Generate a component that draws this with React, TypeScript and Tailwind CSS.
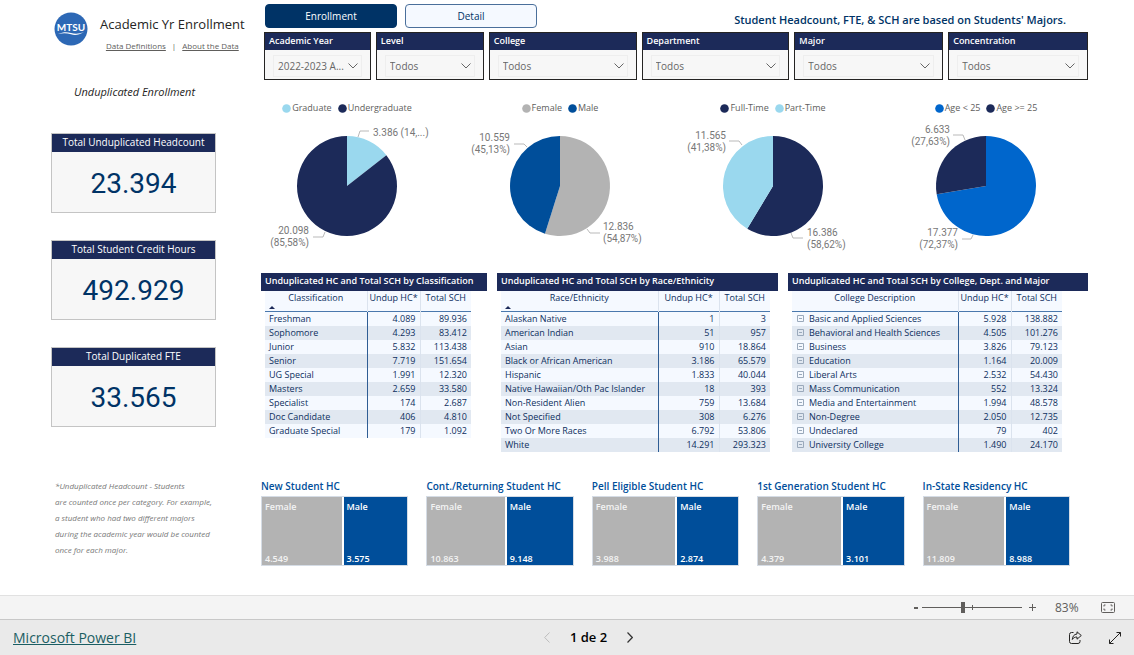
import { useState } from "react"

const slicers = [
  { id: "year", label: "Academic Year", value: "2022-2023 A..." },
  { id: "level", label: "Level", value: "Todos" },
  { id: "college", label: "College", value: "Todos" },
  { id: "department", label: "Department", value: "Todos" },
  { id: "major", label: "Major", value: "Todos" },
  { id: "concentration", label: "Concentration", value: "Todos" },
]

const totals = [
  { title: "Total Unduplicated Headcount", value: "23.394" },
  { title: "Total Student Credit Hours", value: "492.929" },
  { title: "Total Duplicated FTE", value: "33.565" },
]

type Label = { lines: string[]; x: number; y: number; end?: boolean; leader: string }
type Slice = { name: string; color: string; share: number }
type Pie = { slices: Slice[]; labels: Label[] }

const pies: Pie[] = [
  {
    slices: [
      { name: "Graduate", color: "#9ad8ee", share: 0.1442 },
      { name: "Undergraduate", color: "#1c2a59", share: 0.8558 },
    ],
    labels: [
      { lines: ["3.386 (14,...)"], x: 112, y: 18, leader: "97,19 99,13 108,13" },
      { lines: ["20.098", "(85,58%)"], x: 48, y: 116, end: true, leader: "64,114 62,119 52,119" },
    ],
  },
  {
    slices: [
      { name: "Female", color: "#b3b3b3", share: 0.5487 },
      { name: "Male", color: "#004e9a", share: 0.4513 },
    ],
    labels: [
      { lines: ["10.559", "(45,13%)"], x: 36, y: 23, end: true, leader: "40,26 50,26 53,29" },
      { lines: ["12.836", "(54,87%)"], x: 129, y: 112, leader: "113,111 116,115 126,115" },
    ],
  },
  {
    slices: [
      { name: "Full-Time", color: "#1c2a59", share: 0.5862 },
      { name: "Part-Time", color: "#9ad8ee", share: 0.4138 },
    ],
    labels: [
      { lines: ["11.565", "(41,38%)"], x: 39, y: 21, end: true, leader: "42,23 52,23 55,27" },
      { lines: ["16.386", "(58,62%)"], x: 120, y: 118, leader: "104,115 106,120 116,120" },
    ],
  },
  {
    slices: [
      { name: "Age < 25", color: "#0066cc", share: 0.7237 },
      { name: "Age >= 25", color: "#1c2a59", share: 0.2763 },
    ],
    labels: [
      { lines: ["6.633", "(27,63%)"], x: 50, y: 15, end: true, leader: "53,17 63,17 65,22" },
      { lines: ["17.377", "(72,37%)"], x: 58, y: 118, end: true, leader: "62,121 71,121 73,117" },
    ],
  },
]

const classification = [
  ["Freshman", "4.089", "89.936"],
  ["Sophomore", "4.293", "83.412"],
  ["Junior", "5.832", "113.438"],
  ["Senior", "7.719", "151.654"],
  ["UG Special", "1.991", "12.320"],
  ["Masters", "2.659", "33.580"],
  ["Specialist", "174", "2.687"],
  ["Doc Candidate", "406", "4.810"],
  ["Graduate Special", "179", "1.092"],
]

const ethnicity = [
  ["Alaskan Native", "1", "3"],
  ["American Indian", "51", "957"],
  ["Asian", "910", "18.864"],
  ["Black or African American", "3.186", "65.579"],
  ["Hispanic", "1.833", "40.044"],
  ["Native Hawaiian/Oth Pac Islander", "18", "393"],
  ["Non-Resident Alien", "759", "13.684"],
  ["Not Specified", "308", "6.276"],
  ["Two Or More Races", "6.792", "53.806"],
  ["White", "14.291", "293.323"],
]

const colleges = [
  ["Basic and Applied Sciences", "5.928", "138.882"],
  ["Behavioral and Health Sciences", "4.505", "101.276"],
  ["Business", "3.826", "79.123"],
  ["Education", "1.164", "20.009"],
  ["Liberal Arts", "2.532", "54.430"],
  ["Mass Communication", "552", "13.324"],
  ["Media and Entertainment", "1.994", "48.578"],
  ["Non-Degree", "2.050", "12.735"],
  ["Undeclared", "79", "402"],
  ["University College", "1.490", "24.170"],
]

const treemaps = [
  { title: "New Student HC", female: "4.549", male: "3.575" },
  { title: "Cont./Returning Student HC", female: "10.863", male: "9.148" },
  { title: "Pell Eligible Student HC", female: "3.988", male: "2.874" },
  { title: "1st Generation Student HC", female: "4.379", male: "3.101" },
  { title: "In-State Residency HC", female: "11.809", male: "8.988" },
]

const toNumber = (text: string) => Number(text.replace(".", ""))

const CX = 86
const CY = 68
const R = 50

// path of a pie slice, shares counted clockwise from the top
const slicePath = (from: number, share: number) => {
  const a = from * 2 * Math.PI
  const b = (from + share) * 2 * Math.PI
  const big = share > 0.5 ? 1 : 0
  return `M${CX} ${CY} L${CX + R * Math.sin(a)} ${CY - R * Math.cos(a)} A${R} ${R} 0 ${big} 1 ${CX + R * Math.sin(b)} ${CY - R * Math.cos(b)} Z`
}

const PieChart = ({ slices, labels }: Pie) => (
  <div className="w-[172px]">
    <ul className="flex h-3 items-center justify-center gap-1.5 whitespace-nowrap text-[9px] leading-3 text-[#605e5c]">
      {slices.map((slice) => (
        <li key={slice.name} className="flex items-center gap-px">
          <svg className="size-[9px]" viewBox="0 0 9 9">
            <circle cx="4.5" cy="4.5" r="4.3" fill={slice.color} />
          </svg>
          {slice.name}
        </li>
      ))}
    </ul>
    <svg className="mt-1 h-[134px] w-[172px] overflow-visible" viewBox="0 0 172 134">
      {slices.map((slice, index) => (
        <path key={slice.name} d={slicePath(index === 0 ? 0 : slices[0].share, slice.share)} fill={slice.color} />
      ))}
      {labels.map((label) => (
        <g key={label.leader}>
          <polyline points={label.leader} fill="none" stroke="#b9b9b9" />
          {label.lines.map((line, index) => (
            <text
              key={line}
              x={label.x}
              y={label.y + index * 12}
              textAnchor={label.end ? "end" : "start"}
              className="fill-[#777777] font-[Roboto,sans-serif] text-[10px]"
            >
              {line}
            </text>
          ))}
        </g>
      ))}
    </svg>
  </div>
)

type TableProps = {
  title: string
  heading: string
  rows: string[][]
  tableClass: string
  hcClass: string
  expandable?: boolean
}

const DataTable = ({ title, heading, rows, tableClass, hcClass, expandable }: TableProps) => (
  <section className="min-w-0">
    <h2 className="h-[18px] bg-[#1c2a59] pl-1 text-[9px] leading-4 font-semibold whitespace-nowrap text-white">{title}</h2>
    <div className={tableClass}>
      <table className="w-full table-fixed border-collapse text-[9px] text-[#0d2f5e]">
        <thead>
          <tr className="h-5 border-b border-[#4a78ad] bg-[#f5f9ff] align-top leading-[14px]">
            <th className="relative p-0 font-normal">
              {heading}
              {!expandable && (
                <svg className="absolute bottom-0.5 left-1 h-[3px] w-[6px]" viewBox="0 0 6 3">
                  <path d="M0 3 3 0 6 3Z" fill="#1c2a59" />
                </svg>
              )}
            </th>
            <th className={hcClass + " border-l border-[#dbe3ee] p-0 font-normal whitespace-nowrap"}>Undup HC*</th>
            <th className="w-[51px] border-l border-[#dbe3ee] p-0 font-normal whitespace-nowrap">Total SCH</th>
          </tr>
        </thead>
        <tbody>
          {rows.map(([name, hc, sch]) => (
            <tr key={name} className="h-[14px] bg-[#f5f9ff] leading-[14px] even:bg-[#e1e8f1]">
              <td className="pl-1 whitespace-nowrap">
                {expandable ? (
                  <span className="flex items-center gap-[5px]">
                    <button type="button" aria-label={"Expand " + name} className="ml-px">
                      <svg className="size-[7px]" viewBox="0 0 7 7" fill="none" stroke="#9aa9bb">
                        <path d="M.5 .5h6v6h-6zM2 3.5h3" />
                      </svg>
                    </button>
                    {name}
                  </span>
                ) : (
                  name
                )}
              </td>
              <td className="border-l border-[#2f5d94] pr-1 text-right">{hc}</td>
              <td className="border-l border-[#dbe3ee] pr-1 text-right">{sch}</td>
            </tr>
          ))}
        </tbody>
      </table>
    </div>
  </section>
)

const Logo = () => (
  <svg className="size-[34px] shrink-0" viewBox="0 0 34 34" role="img" aria-label="MTSU">
    <circle cx="17" cy="17" r="16.5" fill="#2d68b5" />
    <text x="17" y="19" textAnchor="middle" fill="#fff" className="font-[Lato,sans-serif] text-[10px] font-bold">
      MTSU
    </text>
    <path d="M4 22c5-2 9-2 13-1s8 1 13-1c-5 3-9 3.500-13 2.300s-8-1.300-13-.3z" fill="#fff" />
  </svg>
)

const Sidebar = () => (
  <aside className="w-[261px] shrink-0 pt-3">
    <div className="flex gap-3 pl-[54px]">
      <Logo />
      <div className="whitespace-nowrap">
        <h1 className="text-[13px] leading-6 text-[#252423]">Academic Yr Enrollment</h1>
        <p className="flex justify-center gap-1.5 text-[8px] leading-5 text-[#605e5c]">
          <a href="#definitions" className="underline">Data Definitions</a>
          <span>|</span>
          <a href="#about" className="underline">About the Data</a>
        </p>
      </div>
    </div>
    <p className="mt-7 pl-[74px] text-[11px] leading-4 text-[#252423] italic">Unduplicated Enrollment</p>
    <div className="mt-[33px] ml-[51px] flex w-[165px] flex-col gap-[27px]">
      {totals.map((total) => (
        <section key={total.title} className="border border-[#c4c4c4] bg-[#f7f7f7]">
          <h2 className="h-[18px] bg-[#1c2a59] text-center text-[10px] leading-4 whitespace-nowrap text-white">{total.title}</h2>
          <p className="flex h-[60px] items-center justify-center pt-1 font-[Roboto,sans-serif] text-[28px] text-[#003366]">
            {total.value}
          </p>
        </section>
      ))}
    </div>
    <p className="mt-[51px] ml-[55px] text-[8px] leading-4 whitespace-nowrap text-[#777777] italic">
      *Unduplicated Headcount - Students
      <br />
      are counted once per category. For example,
      <br />
      a student who had two different majors
      <br />
      during the academic year would be counted
      <br />
      once for each major.
    </p>
  </aside>
)

const App = () => {
  const [page, setPage] = useState("Enrollment")
  const [zoom, setZoom] = useState(41)

  return (
    <div className="flex min-h-screen flex-col bg-white font-['Open_Sans',sans-serif]">
      <div className="flex flex-1">
        <Sidebar />
        <main className="min-w-0 flex-1 pt-1 pr-[46px]">
          <div className="flex items-start gap-2 pl-1">
            {["Enrollment", "Detail"].map((name) => (
              <button
                key={name}
                type="button"
                onClick={() => setPage(name)}
                className={
                  name === page
                    ? "h-6 w-[132px] rounded border border-[#003366] bg-[#003366] text-[10px] text-white"
                    : "h-6 w-[132px] rounded border border-[#4a6f9b] bg-[#f5f9ff] text-[10px] text-[#003366]"
                }
              >
                {name}
              </button>
            ))}
            <p className="mr-[22px] ml-auto pt-2 text-[11px] leading-4 font-semibold whitespace-nowrap text-[#003366]">
              Student Headcount, FTE, &amp; SCH are based on Students' Majors.
            </p>
          </div>

          {/* SLICERS */}
          <div className="mt-1 grid grid-cols-[107fr_108fr_148fr_148fr_149fr_140fr] gap-[5px] pl-[3px]">
            {slicers.map((slicer) => (
              <div key={slicer.id} className="h-12 border border-[#252423] bg-[#f7f7f7]">
                <label htmlFor={slicer.id} className="block h-[17px] bg-[#1c2a59] pl-1 text-[9px] leading-4 font-semibold text-white">
                  {slicer.label}
                </label>
                <div className="relative mx-2 mt-[5px]">
                  <select
                    id={slicer.id}
                    className="block h-[22px] w-full appearance-none border border-[#eeeeee] bg-[#f7f7f7] pl-1 text-[10px] text-[#666666]"
                  >
                    <option>{slicer.value}</option>
                  </select>
                  <svg className="pointer-events-none absolute top-2 right-1 h-[6px] w-[10px]" viewBox="0 0 10 6" fill="none" stroke="#666666">
                    <path d="M.5 .5 5 5 9.500 .5" />
                  </svg>
                </div>
              </div>
            ))}
          </div>

          {/* PIES */}
          <div className="mt-[22px] flex justify-between pr-4">
            {pies.map((pie) => (
              <PieChart key={pie.slices[0].name} {...pie} />
            ))}
          </div>

          {/* TABLES */}
          <div className="mt-[21px] grid grid-cols-[226fr_281fr_300fr] gap-[10px]">
            <DataTable title="Unduplicated HC and Total SCH by Classification" heading="Classification" rows={classification} tableClass="ml-1 mr-4" hcClass="w-[53px]" />
            <DataTable title="Unduplicated HC and Total SCH by Race/Ethnicity" heading="Race/Ethnicity" rows={ethnicity} tableClass="ml-1 mr-2" hcClass="w-[61px]" />
            <DataTable title="Unduplicated HC and Total SCH by College, Dept. and Major" heading="College Description" rows={colleges} tableClass="ml-1 mr-[26px]" hcClass="w-[53px]" expandable />
          </div>

          {/* TREEMAPS */}
          <div className="mt-[26px] grid grid-cols-5 gap-[18px] pr-[18px] pb-7">
            {treemaps.map((item) => (
              <section key={item.title}>
                <h2 className="text-[10px] leading-4 font-semibold whitespace-nowrap text-[#004e9a]">{item.title}</h2>
                <div className="mt-0.5 flex h-[70px] gap-0.5 border border-[#d5dce5] text-[9px] leading-3 font-semibold text-white">
                  <div className="flex basis-0 flex-col justify-between bg-[#b3b3b3] px-[3px] pt-1 text-[#f3f3f3]" style={{ flexGrow: toNumber(item.female) }}>
                    <span>Female</span>
                    <span>{item.female}</span>
                  </div>
                  <div className="flex basis-0 flex-col justify-between bg-[#004e9a] px-[3px] pt-1" style={{ flexGrow: toNumber(item.male) }}>
                    <span>Male</span>
                    <span>{item.male}</span>
                  </div>
                </div>
              </section>
            ))}
          </div>
        </main>
      </div>

      <div className="flex h-6 items-center justify-end border-t border-[#e1e1e1] bg-[#f4f4f4] pr-[19px] text-[#605e5c]">
        <button type="button" aria-label="Zoom out" className="w-3">
          <svg className="mx-auto h-[2px] w-1" viewBox="0 0 4 2">
            <path d="M0 0h4v2H0z" fill="#605e5c" />
          </svg>
        </button>
        <div className="relative flex w-[100px] items-center">
          <span className="absolute h-px w-full bg-[#605e5c]" />
          <span className="absolute left-1/2 h-[5px] w-px bg-[#605e5c]" />
          <input
            type="range"
            aria-label="Zoom"
            value={zoom}
            onChange={(e) => setZoom(Number(e.target.value))}
            className="relative h-3 w-full appearance-none bg-transparent [&::-webkit-slider-thumb]:h-[11px] [&::-webkit-slider-thumb]:w-1 [&::-webkit-slider-thumb]:appearance-none [&::-webkit-slider-thumb]:bg-[#605e5c]"
          />
        </div>
        <button type="button" aria-label="Zoom in" className="w-5">
          <svg className="mx-auto size-[7px]" viewBox="0 0 7 7" stroke="#605e5c">
            <path d="M0 3.500h7M3.500 0v7" />
          </svg>
        </button>
        <span className="ml-[13px] w-6 text-[12px] leading-4">83%</span>
        <button type="button" aria-label="Fit to page" className="ml-[22px]">
          <svg className="h-[11px] w-[14px]" viewBox="0 0 14 11" fill="none" stroke="#605e5c">
            <rect x=".5" y=".5" width="13" height="10" rx="1" />
            <path d="M3 4.500V3h1.500M9.500 3H11v1.500M11 6.500V8H9.500M4.500 8H3V6.500" />
          </svg>
        </button>
      </div>

      <footer className="grid h-9 grid-cols-[530fr_auto_487fr] items-center border-t border-[#c8c8c8] bg-[#eaeaea] px-[13px] text-[#252423]">
        <a href="#powerbi" className="justify-self-start text-[14px] leading-5 text-[#1b5e63] underline">Microsoft Power BI</a>
        <nav className="flex items-center gap-5">
          <button type="button" aria-label="Previous page" disabled>
            <svg className="h-[11px] w-[6px]" viewBox="0 0 6 11" fill="none" stroke="#bdbdbd">
              <path d="M5.500 .5 .7 5.500l4.800 5" />
            </svg>
          </button>
          <span className="text-[13px] font-semibold text-black">1 de 2</span>
          <button type="button" aria-label="Next page">
            <svg className="h-[11px] w-[6px]" viewBox="0 0 6 11" fill="none" stroke="#333333" strokeWidth="1.2">
              <path d="M.5 .5l4.800 5-4.800 5" />
            </svg>
          </button>
        </nav>
        <div className="flex items-center gap-[27px] justify-self-end">
          <button type="button" aria-label="Share">
            <svg className="size-[13px]" viewBox="0 0 13 13" fill="none" stroke="#252423" strokeLinejoin="round">
              <path d="M4.500 1.500H2.500a2 2 0 0 0-2 2v7a2 2 0 0 0 2 2h6.500a2 2 0 0 0 2-2V9" />
              <path d="M8 .8 12.300 4.500 8 8.200V6C5.800 6 4.300 6.800 3.300 8.500 3.500 5.500 5 3.200 8 3z" />
            </svg>
          </button>
          <button type="button" aria-label="Full screen">
            <svg className="size-3" viewBox="0 0 12 12" fill="none" stroke="#252423">
              <path d="M.5 11.500l11-11M7.500 .5h4v4M.5 7.500v4h4" />
            </svg>
          </button>
        </div>
      </footer>
    </div>
  )
}

export default App
